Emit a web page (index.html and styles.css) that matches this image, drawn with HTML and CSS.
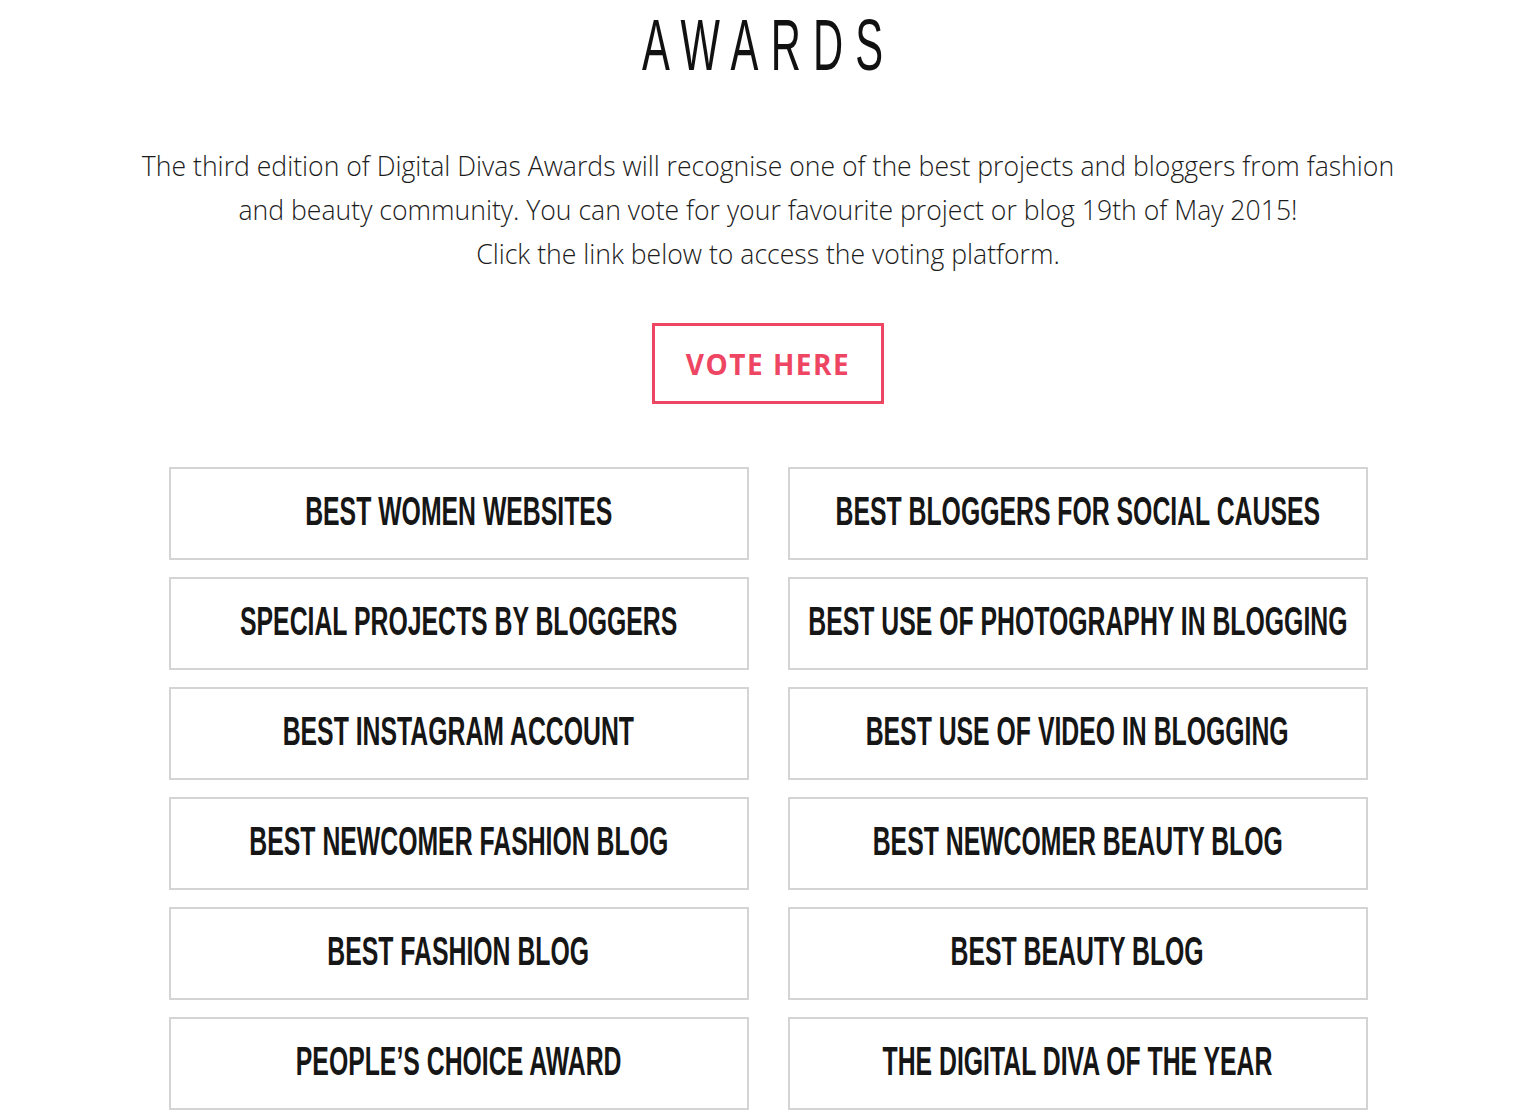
FILE: index.html
```html
<!DOCTYPE html>
<html lang="en">
<head>
<meta charset="utf-8">
<title>Awards</title>
<link rel="stylesheet" href="styles.css">
</head>
<body>
<main class="page">
  <h1 class="title"><span class="title-text">AWARDS</span></h1>
  <p class="intro">The third edition of Digital Divas Awards will recognise one of the best projects and bloggers from fashion<br>and beauty community. You can vote for your favourite project or blog 19th of May 2015!<br>Click the link below to access the voting platform.</p>
  <div class="cta-row"><a class="vote" href="#">VOTE HERE</a></div>
  <section class="grid">
    <div class="cell"><span class="label">BEST WOMEN WEBSITES</span></div>
    <div class="cell"><span class="label">BEST BLOGGERS FOR SOCIAL CAUSES</span></div>
    <div class="cell"><span class="label">SPECIAL PROJECTS BY BLOGGERS</span></div>
    <div class="cell"><span class="label">BEST USE OF PHOTOGRAPHY IN BLOGGING</span></div>
    <div class="cell"><span class="label">BEST INSTAGRAM ACCOUNT</span></div>
    <div class="cell"><span class="label">BEST USE OF VIDEO IN BLOGGING</span></div>
    <div class="cell"><span class="label">BEST NEWCOMER FASHION BLOG</span></div>
    <div class="cell"><span class="label">BEST NEWCOMER BEAUTY BLOG</span></div>
    <div class="cell"><span class="label">BEST FASHION BLOG</span></div>
    <div class="cell"><span class="label">BEST BEAUTY BLOG</span></div>
    <div class="cell"><span class="label">PEOPLE’S CHOICE AWARD</span></div>
    <div class="cell"><span class="label">THE DIGITAL DIVA OF THE YEAR</span></div>
  </section>
</main>
</body>
</html>
```

FILE: styles.css
```css
html, body {
  margin: 0;
  padding: 0;
  background: #ffffff;
}

.page {
  padding-left: 19px;
  padding-top: 9px;
  display: flex;
  flex-direction: column;
  align-items: center;
  overflow: hidden;
}

.title {
  margin: 0;
  height: 72px;
  font-family: "Liberation Sans", Arial, sans-serif;
  font-weight: 400;
  font-size: 72px;
  line-height: 72px;
  color: #111111;
  text-align: center;
}

.title-text {
  display: inline-block;
  letter-spacing: 21px;
  padding-left: 3px;
  transform: scaleX(0.58);
  transform-origin: center;
}

.intro {
  margin: 63px 0 0;
  font-family: "Open Sans", "Noto Sans", sans-serif;
  font-weight: 300;
  font-size: 26.6px;
  line-height: 44px;
  color: #1c1c1c;
  text-align: center;
  white-space: nowrap;
}

.cta-row {
  margin-top: 47px;
  display: flex;
  justify-content: center;
}

.vote {
  box-sizing: border-box;
  width: 232px;
  height: 81px;
  display: flex;
  align-items: center;
  justify-content: center;
  border: 3px solid #ee4562;
  color: #ee4562;
  font-family: "Open Sans", "Noto Sans", sans-serif;
  font-weight: 700;
  font-size: 28px;
  letter-spacing: 1.5px;
  text-decoration: none;
}

.grid {
  margin-top: 63px;
  width: 1199px;
  display: grid;
  grid-template-columns: 580px 580px;
  column-gap: 39px;
  row-gap: 17px;
}

.cell {
  box-sizing: border-box;
  height: 93px;
  border: 2px solid #d4d4d4;
  padding-bottom: 4px;
  display: flex;
  align-items: center;
  justify-content: center;
  overflow: hidden;
}

.label {
  display: inline-block;
  flex: none;
  white-space: nowrap;
  font-family: "Liberation Sans", Arial, sans-serif;
  font-weight: 700;
  font-size: 40px;
  color: #161616;
  transform: scaleX(0.62);
  transform-origin: center;
}
```
